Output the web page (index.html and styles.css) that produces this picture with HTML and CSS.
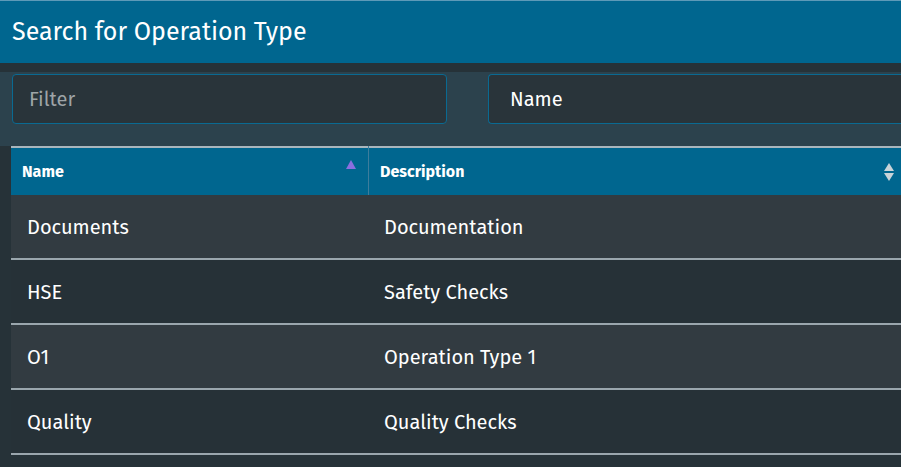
FILE: index.html
```html
<!DOCTYPE html>
<html>
<head>
<meta charset="utf-8">
<link rel="stylesheet" href="styles.css">
</head>
<body>
<div class="dialog">
  <div class="title">Search for Operation Type</div>
  <div class="strip"></div>
  <div class="filters">
    <div class="input placeholder">Filter</div>
    <div class="input select">Name</div>
  </div>
  <div class="table">
    <div class="thead">
      <div class="th col1"><span>Name</span><span class="sort-up"></span></div>
      <div class="th col2"><span>Description</span>
        <svg class="sort-both" width="12" height="20" viewBox="0 0 12 20"><path d="M6 1 L11 9 L1 9 Z" fill="#c9d3d8"/><path d="M6 19 L11 11 L1 11 Z" fill="#c9d3d8"/></svg>
      </div>
    </div>
    <div class="row odd"><div class="td col1">Documents</div><div class="td col2">Documentation</div></div>
    <div class="row even"><div class="td col1">HSE</div><div class="td col2">Safety Checks</div></div>
    <div class="row odd"><div class="td col1">O1</div><div class="td col2">Operation Type 1</div></div>
    <div class="row even"><div class="td col1">Quality</div><div class="td col2">Quality Checks</div></div>
  </div>
</div>
</body>
</html>
```
FILE: styles.css
```css
html, body {
  margin: 0;
  padding: 0;
  width: 901px;
  height: 467px;
  overflow: hidden;
  background: #263238;
  font-family: "Fira Sans", "Open Sans", "Noto Sans", sans-serif;
}
.dialog {
  display: flex;
  flex-direction: column;
  height: 467px;
}
.title {
  height: 63px;
  background: #00668f;
  color: #ffffff;
  font-size: 25px;
  line-height: 63px;
  padding-left: 12px;
  box-sizing: border-box;
  border-top: 1px solid #5d9ab8;
}
.strip {
  height: 9px;
  background: #263238;
}
.filters {
  height: 74px;
  background: #2c424d;
  display: flex;
  gap: 41px;
  padding: 2px 0 0 12px;
  box-sizing: border-box;
}
.input {
  height: 50px;
  box-sizing: border-box;
  border: 1.5px solid #0a6a92;
  border-radius: 4px;
  background: #29343a;
  font-size: 20px;
  line-height: 49px;
  padding-left: 16px;
}
.placeholder {
  width: 435px;
  color: #9ea4a7;
}
.select {
  flex: 1;
  color: #ffffff;
  padding-left: 21px;
  border-right: none;
  border-radius: 4px 0 0 4px;
}
.table {
  margin-left: 11px;
  border-top: 2px solid #a9b6bd;
}
.thead {
  display: flex;
  height: 47px;
  background: #00668f;
  color: #ffffff;
  font-weight: 700;
  font-size: 16px;
}
.th {
  display: flex;
  align-items: center;
  justify-content: space-between;
  position: relative;
}
.th.col1 {
  width: 357px;
  padding-left: 11px;
  padding-right: 12px;
  box-sizing: border-box;
  height: 47px;
}
.th.col2 {
  flex: 1;
  padding-left: 11px;
  padding-right: 6px;
  border-left: 1px solid #3d7d9c;
  margin-top: -2px;
  padding-top: 2px;
}
.sort-up {
  width: 0;
  height: 0;
  border-left: 5px solid transparent;
  border-right: 5px solid transparent;
  border-bottom: 9px solid #8a6fe0;
  align-self: flex-start;
  margin-top: 12px;
}
.row {
  display: flex;
  height: 65px;
  border-bottom: 2px solid #9aa6ad;
  box-sizing: border-box;
  color: #ffffff;
  font-size: 20px;
  align-items: center;
}
.row.odd { background: #323b41; }
.row.even { background: #263137; }
.td.col1 {
  width: 357px;
  padding-left: 16px;
  box-sizing: border-box;
}
.td.col2 {
  flex: 1;
  padding-left: 16px;
}
```
